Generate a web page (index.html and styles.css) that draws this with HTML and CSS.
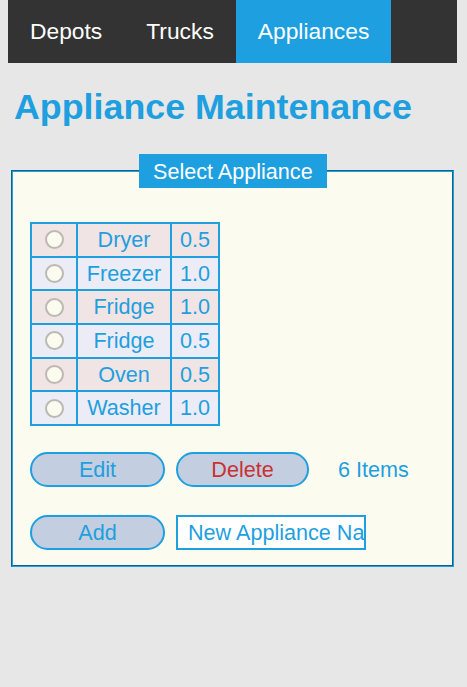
FILE: index.html
```html
<!DOCTYPE html>
<html lang="en">
<head>
<meta charset="utf-8">
<title>Appliance Maintenance</title>
<link rel="stylesheet" href="styles.css">
</head>
<body>
<nav class="nav">
  <a class="tab" href="#">Depots</a>
  <a class="tab" href="#">Trucks</a>
  <a class="tab active" href="#">Appliances</a>
</nav>
<h1 class="title">Appliance Maintenance</h1>
<fieldset class="panel">
  <legend class="legend">Select Appliance</legend>
  <table class="list">
    <tr class="odd"><td class="sel"><input type="radio" name="a" class="radio"></td><td class="name">Dryer</td><td class="val">0.5</td></tr>
    <tr class="even"><td class="sel"><input type="radio" name="a" class="radio"></td><td class="name">Freezer</td><td class="val">1.0</td></tr>
    <tr class="odd"><td class="sel"><input type="radio" name="a" class="radio"></td><td class="name">Fridge</td><td class="val">1.0</td></tr>
    <tr class="even"><td class="sel"><input type="radio" name="a" class="radio"></td><td class="name">Fridge</td><td class="val">0.5</td></tr>
    <tr class="odd"><td class="sel"><input type="radio" name="a" class="radio"></td><td class="name">Oven</td><td class="val">0.5</td></tr>
    <tr class="even"><td class="sel"><input type="radio" name="a" class="radio"></td><td class="name">Washer</td><td class="val">1.0</td></tr>
  </table>
  <div class="row row-actions">
    <button class="btn">Edit</button>
    <button class="btn btn-delete">Delete</button>
    <span class="count">6 Items</span>
  </div>
  <div class="row row-add">
    <button class="btn">Add</button>
    <input class="field" type="text" placeholder="New Appliance Name">
  </div>
</fieldset>
</body>
</html>
```
FILE: styles.css
```css
html, body {
  background: #e7e7e7;
}
body {
  margin: 0;
  font-family: "Liberation Sans", Arial, sans-serif;
  font-size: 18px;
  color: #1e9fdf;
}
.nav {
  display: flex;
  background: #333333;
  margin: 0 10px 0 8px;
}
.tab {
  display: block;
  padding: 18px 22px;
  line-height: 27px;
  font-size: 22.8px;
  color: #ffffff;
  text-decoration: none;
}
.tab.active {
  background: #1e9fdf;
}
.title {
  margin: 24px 0 0 14px;
  font-size: 35.8px;
  line-height: 41px;
  font-weight: bold;
  color: #1e9fdf;
}
.panel {
  margin: 26px 13px 0 11px;
  padding: 0 17px 15px;
  border: 2px groove #1e9fdf;
  background: #fbfcef;
  font-size: 21.6px;
}
.legend {
  margin-left: 109px;
  padding: 4.5px 14px;
  line-height: 25px;
  background: #1e9fdf;
  color: #ffffff;
}
.list {
  margin-top: 34px;
  border-collapse: collapse;
}
.list td {
  border: 2px solid #1e9fdf;
  padding: 0;
  height: 31.7px;
  line-height: 24px;
  text-align: center;
  vertical-align: middle;
  color: #1e9fdf;
}
.list .sel { width: 44px; }
.list .name { width: 92px; }
.list .val { width: 46px; }
.odd td { background: #f0e4e4; }
.even td { background: #ebecf6; }
.radio {
  appearance: none;
  -webkit-appearance: none;
  display: block;
  margin: 0 auto;
  width: 19px;
  height: 19px;
  border: 2px solid #bcb9b3;
  border-radius: 50%;
  background: #fbfbf0;
}
.row {
  display: flex;
  align-items: center;
}
.row-actions {
  margin-top: 26px;
}
.row-add {
  margin-top: 28px;
}
.btn {
  width: 135px;
  height: 35px;
  margin: 0 11px 0 0;
  padding: 0;
  border: 2px solid #1e9fdf;
  border-radius: 18px;
  background: #c4cee1;
  font-family: "Liberation Sans", Arial, sans-serif;
  font-size: 21.6px;
  color: #1e9fdf;
}
.btn-delete {
  width: 133px;
  color: #c93232;
}
.count {
  margin-left: 18px;
  color: #1e9fdf;
}
.field {
  box-sizing: border-box;
  width: 190px;
  height: 35px;
  margin: 0;
  padding: 0 0 0 10px;
  border: 2px solid #1e9fdf;
  background: #ffffff;
  font-family: "Liberation Sans", Arial, sans-serif;
  font-size: 21.6px;
  color: #1e9fdf;
  outline: none;
}
.field::placeholder {
  color: #1e9fdf;
  opacity: 1;
}
```
